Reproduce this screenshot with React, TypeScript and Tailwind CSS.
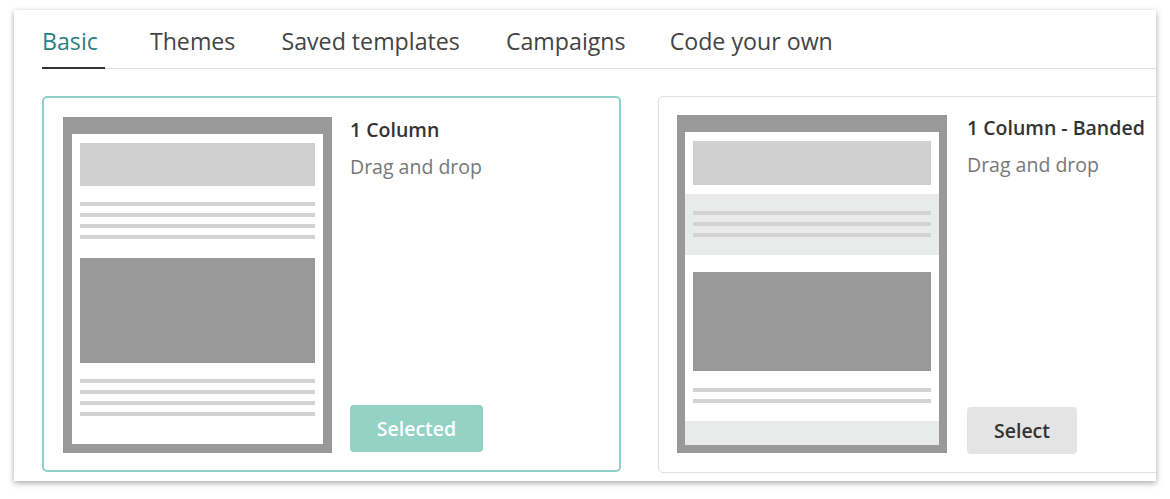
import React from "react";

const tabs = ["Basic", "Themes", "Saved templates", "Campaigns", "Code your own"];
const tabGaps = ["mr-[45px]", "mr-[46px]", "mr-[46px]", "mr-[44px]", "mr-[46px]"];

function Lines({ count }: { count: number }) {
  return (
    <div className="flex flex-col gap-[7px]">
      {Array.from({ length: count }).map((_, i) => (
        <div key={i} className="h-[4px] bg-[#d3d3d3]" />
      ))}
    </div>
  );
}

function PlainThumb() {
  return (
    <div className="w-[269px] h-[336px] shrink-0 bg-[#999999] pt-[17px] px-[9px] pb-[9px]">
      <div className="h-full bg-white px-[8px] pt-[9px] flex flex-col">
        <div className="h-[43px] bg-[#d0d0d0]" />
        <div className="mt-[16px]">
          <Lines count={4} />
        </div>
        <div className="mt-[19px] h-[105px] bg-[#999999]" />
        <div className="mt-[16px]">
          <Lines count={4} />
        </div>
      </div>
    </div>
  );
}

function BandedThumb() {
  return (
    <div className="w-[270px] h-[338px] shrink-0 bg-[#999999] pt-[17px] px-[8px] pb-[8px]">
      <div className="h-full bg-white pt-[9px] flex flex-col">
        <div className="mx-[8px] h-[44px] bg-[#d0d0d0]" />
        <div className="mt-[9px] h-[61px] bg-[#e9ebeb] px-[8px] pt-[17px]">
          <Lines count={3} />
        </div>
        <div className="mx-[8px] mt-[17px] h-[99px] bg-[#999999]" />
        <div className="mx-[8px] mt-[17px]">
          <Lines count={2} />
        </div>
        <div className="mt-auto h-[24px] bg-[#e9ebeb]" />
      </div>
    </div>
  );
}

export default function App() {
  return (
    <div
      className="w-[1170px] h-[499px] bg-white pt-[10px] pl-[14px]"
      style={{ fontFamily: '"Open Sans", "Liberation Sans", sans-serif' }}
    >
      <div className="w-[1142px] h-[471px] bg-white overflow-hidden shadow-[0_2px_6px_rgba(0,0,0,0.35)] pl-[28px]">
        <div className="flex border-b border-[#dddddd] h-[59px] items-end">
          {tabs.map((t, i) => (
            <div
              key={t}
              className={
                i === 0
                  ? `pt-[15px] pb-[10px] pr-[7px] ${tabGaps[i]} border-b-2 border-[#333333] -mb-px text-[23.2px] leading-[32px] text-[#2a7f86]`
                  : `pt-[15px] pb-[11px] ${tabGaps[i]} text-[23.2px] leading-[32px] text-[#444444]`
              }
            >
              {t}
            </div>
          ))}
        </div>

        <div className="flex gap-[37px] mt-[27px]">
          <div className="w-[579px] h-[376px] shrink-0 border-2 border-[#8fd1c4] rounded-[5px] pt-[19px] px-[19px] pb-[17px] flex">
            <PlainThumb />
            <div className="ml-[18px] flex flex-col">
              <div className="text-[19.5px] leading-[26px] font-semibold text-[#333333]">1 Column</div>
              <div className="mt-[11px] text-[19.5px] leading-[26px] text-[#777777]">Drag and drop</div>
              <button className="mt-auto mb-[1px] w-[133px] h-[47px] rounded-[4px] bg-[#93d2c5] text-white text-[19.5px] font-semibold">
                Selected
              </button>
            </div>
          </div>

          <div className="w-[579px] h-[377px] shrink-0 border border-[#e0e0e0] rounded-[5px] p-[18px] flex">
            <BandedThumb />
            <div className="ml-[20px] flex flex-col">
              <div className="text-[19.5px] leading-[26px] font-semibold text-[#333333] whitespace-nowrap">
                1 Column - Banded
              </div>
              <div className="mt-[11px] text-[19.5px] leading-[26px] text-[#777777]">Drag and drop</div>
              <button className="mt-auto w-[110px] h-[47px] rounded-[4px] bg-[#e4e4e4] text-[#333333] text-[19.5px] font-semibold">
                Select
              </button>
            </div>
          </div>
        </div>
      </div>
    </div>
  );
}
